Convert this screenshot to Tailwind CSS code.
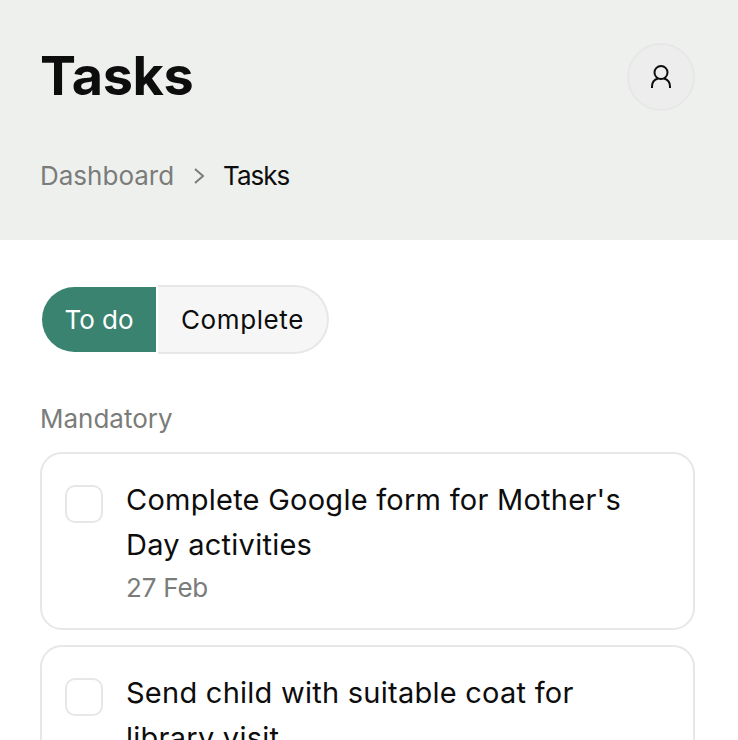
<!DOCTYPE html>
<html lang="en">
<head>
  <meta charset="UTF-8" />
  <meta name="viewport" content="width=device-width, initial-scale=1.0" />
  <title>Tasks</title>
  <script src="https://cdn.jsdelivr.net/npm/@tailwindcss/browser@4"></script>
</head>
<body class="h-[740px] overflow-hidden bg-white font-['Inter',sans-serif] text-[#0d0d0d]">

  <header class="h-[240px] bg-[#eef0ee] pl-[40px] pr-[43px]">
    <div class="flex items-start justify-between pt-[43px]">
      <h1 class="text-[54px] leading-[66px] font-bold tracking-[-0.4px]">Tasks</h1>
      <button class="flex h-[68px] w-[68px] items-center justify-center rounded-full border-2 border-[#e6e7e6] bg-[#ecedec]">
        <svg class="h-[26px] w-[26px]" viewBox="0 0 26 26" fill="none" stroke="#0d0d0d" stroke-width="2">
          <circle cx="13" cy="8.5" r="6.5" />
          <path d="M4 24v-1.5c0-4 2.500-7 6-8M22 24v-1.500c0-4-2.500-7-6-8" />
        </svg>
      </button>
    </div>
    <nav class="mt-[45px] flex items-center text-[26px] leading-[40px]">
      <span class="text-[#7a7c7a]">Dashboard</span>
      <svg class="ml-[19px] mr-[18px] h-[18px] w-[12px]" viewBox="0 0 12 18" fill="none" stroke="#7a7c7a" stroke-width="2">
        <path d="M2 2l8 7-8 7" />
      </svg>
      <span class="tracking-[-1px]">Tasks</span>
    </nav>
  </header>

  <main class="pl-[40px] pr-[43px]">
    <div class="mt-[45px] flex items-center pl-[2px]">
      <div class="flex h-[65px] w-[114px] items-center justify-center rounded-l-full bg-[#3a8370] text-[26px] text-white">To do</div>
      <div class="ml-[2px] flex h-[69px] w-[171px] items-center justify-center rounded-r-full border-2 border-l-0 border-[#e6e7e6] bg-[#f6f6f6] text-[26px] tracking-[0.6px]">Complete</div>
    </div>

    <h2 class="mt-[45px] text-[26px] leading-[40px] text-[#7a7c7a]">Mandatory</h2>

    <section class="mt-[13px] flex flex-col gap-[15px]">
      <article class="flex h-[178px] gap-[23px] rounded-[22px] border-2 border-[#e6e7e6] pl-[23px] pr-[40px] pt-[23px]">
        <span class="mt-[8px] h-[38px] w-[38px] shrink-0 rounded-[10px] border-2 border-[#e6e7e6]"></span>
        <div>
          <p class="text-[29px] leading-[45px] tracking-[0.25px]">Complete Google form for Mother's Day activities</p>
          <p class="mt-[1px] text-[26px] leading-[40px] tracking-[-0.2px] text-[#7a7c7a]">27 Feb</p>
        </div>
      </article>
      <article class="flex h-[178px] gap-[23px] rounded-[22px] border-2 border-[#e6e7e6] pl-[23px] pr-[40px] pt-[23px]">
        <span class="mt-[8px] h-[38px] w-[38px] shrink-0 rounded-[10px] border-2 border-[#e6e7e6]"></span>
        <div>
          <p class="text-[29px] leading-[45px] tracking-[0.25px]">Send child with suitable coat for library visit</p>
        </div>
      </article>
    </section>
  </main>

</body>
</html>
